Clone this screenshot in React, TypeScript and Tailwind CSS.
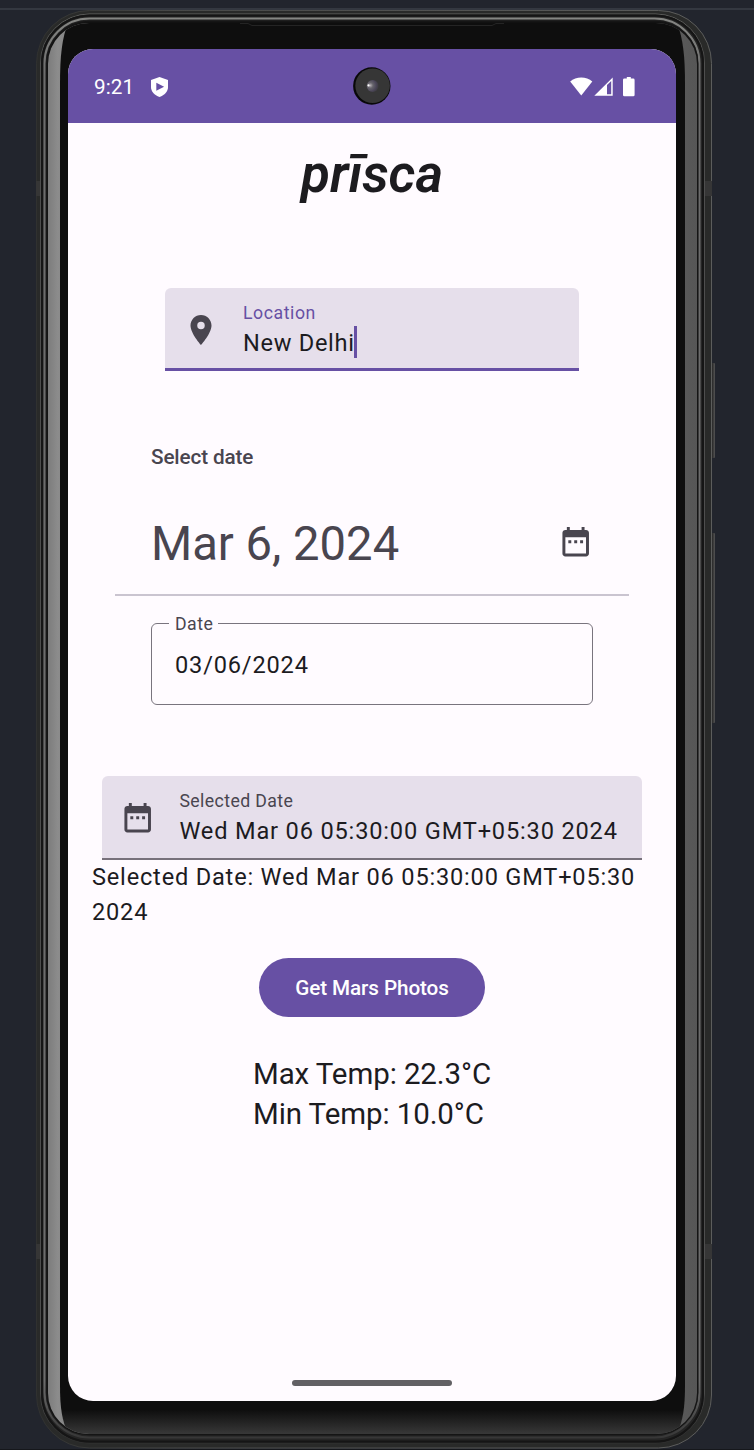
import React from "react";

function DeviceFrame() {
  return (
    <svg className="absolute inset-0" width="754" height="1450" viewBox="0 0 754 1450" aria-hidden="true">
      <defs>
        <linearGradient id="side" x1="0" x2="1" y1="0" y2="0">
          <stop offset="0" stopColor="#7c7c7c" />
          <stop offset="0.015" stopColor="#8c8c8c" />
          <stop offset="0.04" stopColor="#818181" />
          <stop offset="0.5" stopColor="#4a4a4a" />
          <stop offset="0.96" stopColor="#5b5b5b" />
          <stop offset="1" stopColor="#565656" />
        </linearGradient>
        <linearGradient id="glass" x1="0" x2="0" y1="0" y2="1">
          <stop offset="0" stopColor="#0e0e0e" />
          <stop offset="0.983" stopColor="#0e0e0e" />
          <stop offset="1" stopColor="#383838" />
        </linearGradient>
        <linearGradient id="rim" x1="0" x2="0" y1="0" y2="1">
          <stop offset="0" stopColor="#858683" />
          <stop offset="0.04" stopColor="#6c6c6c" />
          <stop offset="0.96" stopColor="#6c6c6c" />
          <stop offset="1" stopColor="#373737" />
        </linearGradient>
        <linearGradient id="edge" x1="0" x2="1" y1="0" y2="0">
          <stop offset="0" stopColor="#303130" />
          <stop offset="0.2" stopColor="#484948" />
          <stop offset="1" stopColor="#5c5d5c" />
        </linearGradient>
        <linearGradient id="key" x1="0" x2="1" y1="0" y2="0">
          <stop offset="0" stopColor="#252525" />
          <stop offset="0.6" stopColor="#2f2f2f" />
          <stop offset="1" stopColor="#555" />
        </linearGradient>
        <clipPath id="inside">
          <rect x="48" y="23" width="649" height="1411" rx="41" />
        </clipPath>
      </defs>
      <rect x="0" y="8" width="754" height="2" fill="#343840" />
      <rect x="0" y="1449" width="754" height="1" fill="#15171b" />
      <rect x="709" y="363" width="6" height="95" rx="1" fill="url(#key)" />
      <rect x="709" y="533" width="6" height="190" rx="1" fill="url(#key)" />
      <rect x="36.5" y="10.5" width="675" height="1437.5" rx="53" fill="#292a29" stroke="url(#edge)" />
      <path d="M36 181h4v15h-4zM705 181h7v15h-7zM36 1244h4v15h-4zM705 1244h7v15h-7z" fill="#363636" />
      <rect x="40.5" y="14" width="664" height="1429" rx="49" fill="#1c1c1c" stroke="url(#rim)" strokeOpacity="0.6" />
      <rect x="42" y="15.5" width="661" height="1426" rx="48" fill="#252525" stroke="#151515" strokeWidth="2" />
      <rect x="44.5" y="18.5" width="655" height="1419" rx="45" fill="#222" stroke="url(#rim)" strokeWidth="2" />
      <rect x="47" y="21.5" width="650.5" height="1413" rx="42" fill="#111" stroke="#151515" strokeWidth="1.5" />
      <g clipPath="url(#inside)">
        <rect x="48" y="23" width="649" height="1411" fill="url(#side)" />
        <path d="M60 84C60 56 62 38 68 23H677C683 38 685 56 685 84V1385C685 1408 683 1420 677 1434H68C62 1420 60 1408 60 1385Z" fill="url(#glass)" />
      </g>
      <path d="M240 23.5h8l4 2h240l4-2h8" fill="none" stroke="#242424" />
    </svg>
  );
}

function PinIcon() {
  return (
    <svg className="mt-px size-[36px] shrink-0 fill-[#49454f]" viewBox="0 0 24 24">
      <path d="M12 2C8.13 2 5 5.13 5 9c0 5.25 7 13 7 13s7-7.75 7-13c0-3.87-3.13-7-7-7zm0 9.5a2.5 2.5 0 1 1 0-5 2.5 2.5 0 0 1 0 5z" />
    </svg>
  );
}

function CalendarIcon() {
  return (
    <svg className="size-[35.4px] shrink-0 fill-[#49454f]" viewBox="0 0 24 24">
      <path d="M9 11H7v2h2v-2zm4 0h-2v2h2v-2zm4 0h-2v2h2v-2zm2-7h-1V2h-2v2H8V2H6v2H5c-1.11 0-1.99.9-1.99 2L3 20c0 1.1.89 2 2 2h14c1.1 0 2-.9 2-2V6c0-1.1-.9-2-2-2zm0 16H5V9h14v11z" />
    </svg>
  );
}

function Camera() {
  return (
    <svg className="size-[38px]" viewBox="0 0 38 38">
      <defs>
        <radialGradient id="lens" cx="0.3" cy="0.45" r="0.75">
          <stop offset="0" stopColor="#b4aeb4" />
          <stop offset="0.3" stopColor="#66646b" />
          <stop offset="0.65" stopColor="#4b4658" />
          <stop offset="1" stopColor="#363636" />
        </radialGradient>
      </defs>
      <circle cx="18.8" cy="19" r="18.7" fill="#080808" />
      <circle cx="19.6" cy="18.7" r="17.3" fill="#363636" />
      <circle cx="19.7" cy="19" r="6" fill="url(#lens)" />
      <circle cx="15.5" cy="18.4" r="1.1" fill="#fff" />
    </svg>
  );
}

function StatusBar() {
  return (
    <header className="relative flex h-[74px] items-center bg-[#6750a4] pt-[2px] pl-[26px] text-white">
      <span className="w-[57px] text-[20.7px] leading-6 tracking-[0.1px]">9:21</span>
      <svg className="h-[20px] w-[17px]" viewBox="0 0 17 20">
        <path d="M8.5 0 17 3v7c0 4.6-3.4 8.2-8.5 10C3.4 18.2 0 14.6 0 10V3z" fill="#fff" />
        <path d="M5.3 5.8v8l7.8-4z" fill="#6750a4" />
      </svg>
      <div className="absolute top-[18px] left-[285px]">
        <Camera />
      </div>
      <svg className="mr-[40px] ml-auto h-5 w-[66px]" viewBox="0 0 66 20" fill="#fff">
        <path d="M.2 4.5C6-.8 16.5-.8 22.3 4.5L11.25 18.5z" />
        <path fillRule="evenodd" d="M42.7.5v18.2H24.3zM37 8v9.200h4.200V4z" />
        <path d="M56.8 0h4v1.5h2.4q1.4 0 1.4 1.4v15q0 1.4-1.4 1.4h-8.8q-1.4 0-1.4-1.4v-15q0-1.4 1.4-1.4h2.4z" />
      </svg>
    </header>
  );
}

type FieldProps = {
  label: string;
  value: string;
  icon: React.ReactNode;
  focused?: boolean;
};

function FilledField({ label, value, icon, focused }: FieldProps) {
  return (
    <div
      className={
        focused
          ? "mx-auto flex h-[83px] w-[414px] items-center gap-[24px] rounded-t-[6px] border-b-3 border-[#6750a4] bg-[#e6dfeb] pt-[3px] pl-[18px]"
          : "mx-auto flex h-[84px] w-[540px] items-center gap-[24px] rounded-t-[6px] border-b-2 border-[#77717b] bg-[#e6dfeb] pt-[2px] pl-[18px]"
      }
    >
      {icon}
      <div className="flex flex-col pt-[2px]">
        <span
          className={
            focused
              ? "text-[17.7px] leading-6 tracking-[0.55px] text-[#6750a4]"
              : "text-[17.7px] leading-6 tracking-[0.4px] text-[#49454f]"
          }
        >
          {label}
        </span>
        <div className="flex h-9 items-center">
          <span
            className={
              focused
                ? "text-[23.6px] leading-9 tracking-[0.7px] whitespace-nowrap"
                : "text-[23.6px] leading-9 tracking-[0.83px] whitespace-nowrap"
            }
          >
            {value}
          </span>
          {focused && <span className="-mt-[2px] -ml-px h-8 w-[3px] bg-[#6750a4]" />}
        </div>
      </div>
    </div>
  );
}

export default function App() {
  return (
    <div className="relative h-[1450px] w-[754px] overflow-hidden bg-[#22252d] pt-[49px] pl-[68px] font-['Roboto',sans-serif] text-[#1c1b1f]">
      <DeviceFrame />
      <main className="relative flex h-[1352px] w-[608px] flex-col overflow-hidden rounded-[25px] bg-[#fffbff]">
        <StatusBar />
        <h1 className="mt-[20px] h-[62px] text-center text-[53px] leading-[62px] font-semibold italic">prīsca</h1>
        <div className="mt-[83px]">
          <FilledField label="Location" value="New Delhi" icon={<PinIcon />} focused />
        </div>

        <section className="mx-[47px] mt-[74px] border-b-2 border-[#cac4d0] px-9">
          <h2 className="text-[20.7px] leading-6 font-medium tracking-[-0.12px] text-[#49454f]">Select date</h2>
          <div className="mt-[45px] flex h-[58px] items-center justify-between pb-[3px]">
            <span className="pt-[5px] text-[47.2px] leading-[56px] text-[#49454f]">Mar 6, 2024</span>
            <CalendarIcon />
          </div>
          <div className="h-[22px]" />
        </section>

        <fieldset className="mx-[83px] mt-[16px] h-[93px] rounded-[6px] border-[1.5px] border-[#79747e] pl-[17px]">
          <legend className="h-[22px] pr-[5px] pl-[6px] pt-px text-[17.7px] leading-[22px] tracking-[0.5px] text-[#49454f]">Date</legend>
          <div className="mt-[13px] pl-[6px] text-[23.6px] leading-9 tracking-[0.82px]">03/06/2024</div>
        </fieldset>

        <div className="mt-[71px]">
          <FilledField label="Selected Date" value="Wed Mar 06 05:30:00 GMT+05:30 2024" icon={<CalendarIcon />} />
        </div>
        <p className="mr-[24px] ml-[24px] text-[23.6px] leading-[35.4px] tracking-[0.8px]">
          Selected Date: Wed Mar 06 05:30:00 GMT+05:30 2024
        </p>

        <button className="mx-auto mt-[27px] h-[59px] w-[226px] shrink-0 rounded-full bg-[#6750a4] pt-[2px] text-[20.7px] font-medium tracking-[-0.1px] text-white">
          Get Mars Photos
        </button>
        <div className="mt-[37px] ml-[185px] text-[29.5px] leading-10 tracking-[-0.1px]">
          <div>Max Temp: 22.3°C</div>
          <div>Min Temp: 10.0°C</div>
        </div>
        <div className="mx-auto mt-auto mb-[15px] h-[6px] w-[160px] rounded-full bg-[#626064]" />
      </main>
    </div>
  );
}
